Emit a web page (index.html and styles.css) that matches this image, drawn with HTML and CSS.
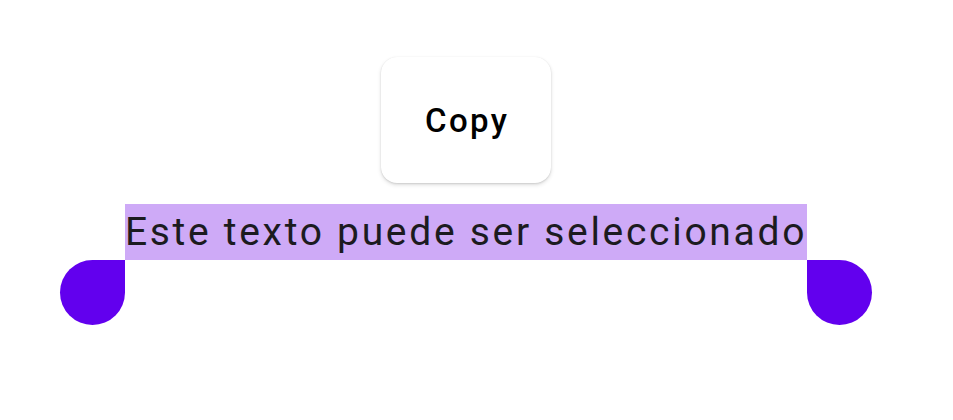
FILE: index.html
```html
<!DOCTYPE html>
<html lang="es">
<head>
<meta charset="utf-8">
<title>Selección de texto</title>
<link rel="stylesheet" href="styles.css">
</head>
<body>
<div class="stage">
  <div class="toolbar"><span class="toolbar-item">Copy</span></div>
  <div class="selected-line"><span class="selection">Este texto puede ser seleccionado</span></div>
  <div class="handles">
    <span class="handle handle-start"></span>
    <span class="handle handle-end"></span>
  </div>
</div>
</body>
</html>
```
FILE: styles.css
```css
html, body {
  margin: 0;
  padding: 0;
  background: #ffffff;
}
body {
  width: 953px;
  height: 420px;
  overflow: hidden;
  font-family: Roboto, "Noto Sans", sans-serif;
}
.stage {
  width: 812px;
  padding: 57px 0 0 60px;
  display: flex;
  flex-direction: column;
  align-items: center;
}
.toolbar {
  width: 170px;
  height: 126px;
  box-sizing: border-box;
  border-radius: 16px;
  background: #ffffff;
  box-shadow: 0 2px 4px rgba(0,0,0,0.12), 0 1px 2px rgba(0,0,0,0.10), 0 0 1px rgba(0,0,0,0.08);
  display: flex;
  align-items: center;
  justify-content: center;
}
.toolbar-item {
  font-weight: 500;
  font-size: 33px;
  letter-spacing: 2.4px;
  margin-right: -2.4px;
  color: #000000;
}
.selected-line {
  margin-top: 21px;
  height: 56px;
  line-height: 56px;
  font-size: 39px;
  letter-spacing: 2.7px;
  color: #1c1b1f;
}
.selection {
  display: inline-block;
  background: #ceaaf7;
  height: 56px;
}
.handles {
  width: 812px;
  display: flex;
  justify-content: space-between;
}
.handle {
  width: 65px;
  height: 65px;
  background: #6200ee;
  border-radius: 50%;
}
.handle-start {
  border-top-right-radius: 0;
}
.handle-end {
  border-top-left-radius: 0;
}
```
